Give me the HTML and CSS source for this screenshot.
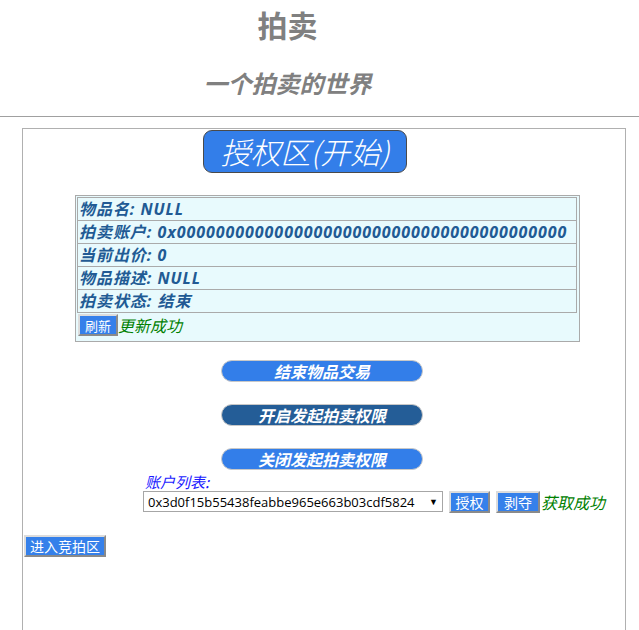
FILE: index.html
```html
<!DOCTYPE html>
<html lang="zh">
<head>
<meta charset="utf-8">
<title>拍卖</title>
<link rel="stylesheet" href="styles.css">
</head>
<body>
<header class="top">
  <h1 class="brand">拍卖</h1>
  <h2 class="slogan">一个拍卖的世界</h2>
</header>
<div class="rule"></div>
<main class="panel">
  <div class="title">授权区(开始)</div>
  <div class="info">
    <div class="row">物品名: NULL</div>
    <div class="row">拍卖账户: 0x0000000000000000000000000000000000000000</div>
    <div class="row">当前出价: 0</div>
    <div class="row">物品描述: NULL</div>
    <div class="row">拍卖状态: 结束</div>
    <div class="actions"><button class="btn">刷新</button><span class="ok">更新成功</span></div>
  </div>
  <div class="pills">
    <button class="pill">结束物品交易</button>
    <button class="pill dark">开启发起拍卖权限</button>
    <button class="pill">关闭发起拍卖权限</button>
  </div>
  <div class="accounts">
    <div class="label">账户列表:</div>
    <div class="acct-row">
      <div class="select"><span class="sel-text">0x3d0f15b55438feabbe965e663b03cdf5824</span><span class="arrow">▼</span></div>
      <button class="btn grant">授权</button>
      <button class="btn grant">剥夺</button>
      <span class="ok">获取成功</span>
    </div>
  </div>
  <button class="btn enter">进入竞拍区</button>
</main>
</body>
</html>
```
FILE: styles.css
```css
* { box-sizing: border-box; }
html, body { margin: 0; padding: 0; background: #fff; }
body {
  width: 639px;
  height: 630px;
  overflow: hidden;
  font-family: "Noto Sans", "Noto Sans CJK SC", sans-serif;
}
.top {
  display: flex;
  flex-direction: column;
  align-items: center;
  padding-right: 64px;
  color: #808080;
}
.brand {
  margin: 6px 0 0;
  font-size: 30px;
  line-height: 40px;
  font-weight: 700;
}
.slogan {
  margin: 22px 0 0;
  font-size: 24px;
  line-height: 32px;
  font-weight: 700;
  font-style: italic;
}
.rule {
  margin-top: 16px;
  height: 1px;
  background: #a0a0a0;
}
.panel {
  margin: 11px 0 0 22px;
  width: 604px;
  height: 520px;
  border: 1px solid #b0b0b0;
  display: flex;
  flex-direction: column;
  align-items: flex-start;
}
.title {
  margin: 1px 0 0 180px;
  width: 204px;
  height: 43px;
  border: 1px solid #4a4a4a;
  border-radius: 9px;
  background: #337ee9;
  color: #fff;
  font-size: 30px;
  font-style: italic;
  line-height: 40px;
  text-align: center;
  font-family: "Noto Sans CJK SC", sans-serif;
  font-weight: 300;
}
.info {
  margin: 22px 0 0 52px;
  width: 505px;
  border: 1px solid #aaa;
  background: #e8fafd;
  padding: 1px 2px 1px 1px;
}
.row {
  height: 24px;
  border: 1px solid #aaa;
  margin-bottom: -1px;
  padding-left: 1px;
  color: #215a94;
  font-size: 16px;
  font-weight: 700;
  font-style: italic;
  line-height: 22px;
  white-space: nowrap;
  letter-spacing: 0.95px;
}
.actions {
  margin-top: 2px;
  height: 26px;
  display: flex;
  align-items: flex-start;
  padding-left: 1px;
}
.btn {
  font-family: "Noto Sans CJK SC", sans-serif;
  background: #3580ea;
  color: #fff;
  font-size: 13px;
  line-height: 17px;
  padding: 0 5px;
  border: 2px solid;
  border-color: #dcdcdc #8a8a8a #8a8a8a #dcdcdc;
  height: 22px;
  cursor: pointer;
}
.ok {
  color: #008000;
  font-size: 16px;
  font-style: italic;
  line-height: 22px;
  font-family: "Noto Sans CJK SC", sans-serif;
}
.pills {
  margin: 18px 0 0 198px;
  display: flex;
  flex-direction: column;
  gap: 22px;
}
.pill {
  width: 202px;
  height: 22px;
  border: 1px solid #c8c8c8;
  border-radius: 11px;
  background: #337ee9;
  color: #fff;
  font-family: "Noto Sans CJK SC", sans-serif;
  font-size: 16px;
  font-weight: 700;
  font-style: italic;
  line-height: 19px;
  padding: 0;
  text-align: center;
}
.pill.dark { background: #245d97; }
.accounts {
  margin: 2px 0 0 120px;
}
.label {
  margin-left: 2px;
  color: #1a1aff;
  font-family: "Noto Sans CJK SC", sans-serif;
  font-size: 15px;
  font-style: italic;
  line-height: 19px;
}
.acct-row {
  margin-top: 0;
  display: flex;
  align-items: flex-start;
}
.select {
  width: 300px;
  height: 21px;
  border: 1px solid #a6a6a6;
  background: #fff;
  display: flex;
  align-items: center;
  padding: 0 4px 0 4px;
  font-family: "Open Sans", sans-serif;
  font-size: 13px;
  color: #000;
}
.sel-text {
  flex: 1;
  white-space: nowrap;
}
.arrow {
  font-size: 9px;
  margin-left: 4px;
}
.grant {
  margin-left: 6px;
  width: 41px;
  padding: 0;
  font-size: 14px;
}
.grant + .grant { width: 44px; }
.acct-row .ok { margin-left: 1px; }
.enter {
  margin: 22px 0 0 1px;
  height: 22px;
  padding: 0 4px;
  font-size: 14px;
}
```
